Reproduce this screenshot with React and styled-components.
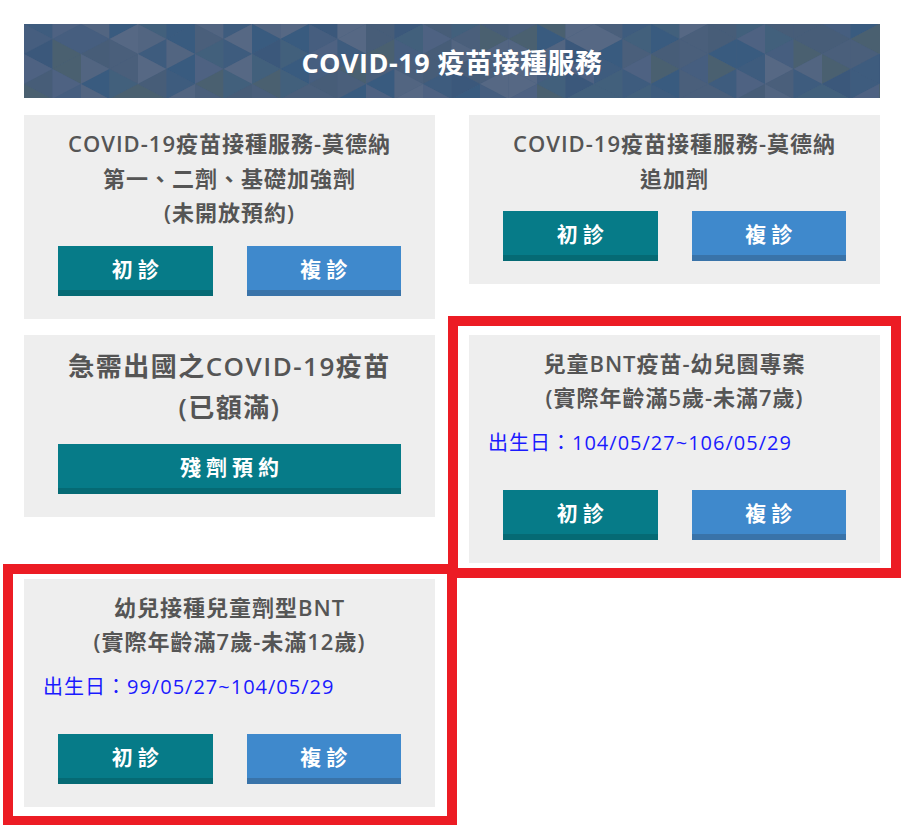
import React from "react";
import styled, { createGlobalStyle, css } from "styled-components";

const GlobalStyle = createGlobalStyle`
  html {
    overflow: hidden;
  }
  body {
    margin: 0;
    padding: 0;
    background: #fff;
    font-family: "Open Sans", "Noto Sans CJK TC", sans-serif;
  }
`;

const Page = styled.div`
  padding: 24px 24px 19px;
`;

const Banner = styled.div`
  position: relative;
  height: 74px;
  background: #475f7f;
  overflow: hidden;
  display: flex;
  align-items: center;
  justify-content: center;
  margin-bottom: 17px;
`;

const PatternSvg = styled.svg`
  position: absolute;
  inset: 0;
`;

const BannerTitle = styled.h1`
  position: relative;
  margin: 0;
  color: #fff;
  font-size: 27px;
  font-weight: 700;
  letter-spacing: 0.5px;
`;

const Grid = styled.div`
  display: grid;
  grid-template-columns: 1fr 1fr;
  column-gap: 34px;
  row-gap: 16px;
  align-items: start;
`;

const Card = styled.div`
  position: relative;
  background: #eeeeee;
  padding: 11px 0 23px;

  ${(p) =>
    p.$mark &&
    css`
      &::after {
        content: "";
        position: absolute;
        top: ${p.$mark[0]}px;
        right: ${p.$mark[1]}px;
        bottom: ${p.$mark[2]}px;
        left: ${p.$mark[3]}px;
        border: 10px solid #ec1c24;
        pointer-events: none;
      }
    `}
`;

const CardTitle = styled.div`
  text-align: center;
  color: #555;
  font-size: ${(p) => (p.$big ? 26 : 22)}px;
  line-height: ${(p) => (p.$big ? 41 : 34.5)}px;
  letter-spacing: ${(p) => (p.$big ? 1.5 : 1)}px;
  font-weight: 600;
  margin-bottom: 16px;
`;

const Birth = styled.div`
  color: #1a1aff;
  font-size: 20px;
  line-height: 30px;
  letter-spacing: 1px;
  padding-left: 19px;
  margin: -3px 0 32px;
`;

const ButtonRow = styled.div`
  display: flex;
  gap: 34px;
  padding: 0 34px;
`;

const ActionButton = styled.button`
  flex: 1;
  height: 50px;
  border: 0;
  border-bottom: 6px solid ${(p) => (p.$blue ? "#3973a9" : "#056a74")};
  background: ${(p) => (p.$blue ? "#3f89cc" : "#067b88")};
  color: #fff;
  font-family: "Open Sans", "Noto Sans CJK TC", sans-serif;
  font-size: 21px;
  font-weight: 700;
  letter-spacing: 5px;
  padding: 0 0 0 5px;
  cursor: pointer;
`;

const palette = [
  "#465e7f",
  "#3e5c7e",
  "#4e6282",
  "#3b587b",
  "#526581",
  "#42607c",
  "#4a5f7b",
  "#395b7f",
  "#566884",
  "#475d78",
  "#4a6070",
];

function BannerPattern() {
  const w = 28.5;
  const tris = [];
  for (let k = 0; k < 31; k++) {
    const x0 = k * w;
    const x1 = (k + 1) * w;
    const off = (k % 2) * 15;
    for (let j = -1; j < 3; j++) {
      const y = j * 30 + off;
      const r1 = Math.abs(Math.sin(k * 12.9898 + j * 78.233) * 43758.5453) % 1;
      const r2 = Math.abs(Math.sin(k * 39.346 + j * 11.135 + 3.1) * 24634.6345) % 1;
      tris.push(
        <polygon
          key={`a${k}-${j}`}
          points={`${x0},${y} ${x0},${y + 30} ${x1},${y + 15}`}
          fill={palette[Math.floor(r1 * palette.length)]}
        />
      );
      tris.push(
        <polygon
          key={`b${k}-${j}`}
          points={`${x1},${y + 15} ${x1},${y + 45} ${x0},${y + 30}`}
          fill={palette[Math.floor(r2 * palette.length)]}
        />
      );
    }
  }
  return (
    <PatternSvg width="100%" height="74" viewBox="0 0 856 74" preserveAspectRatio="none">
      {tris}
    </PatternSvg>
  );
}

const App = () => {
  return (
    <Page>
      <GlobalStyle />
      <Banner>
        <BannerPattern />
        <BannerTitle>COVID-19 疫苗接種服務</BannerTitle>
      </Banner>
      <Grid>
        <Card>
          <CardTitle>
            COVID-19疫苗接種服務-莫德納
            <br />
            第一、二劑、基礎加強劑
            <br />
            (未開放預約)
          </CardTitle>
          <ButtonRow>
            <ActionButton>初診</ActionButton>
            <ActionButton $blue>複診</ActionButton>
          </ButtonRow>
        </Card>
        <Card>
          <CardTitle>
            COVID-19疫苗接種服務-莫德納
            <br />
            追加劑
          </CardTitle>
          <ButtonRow>
            <ActionButton>初診</ActionButton>
            <ActionButton $blue>複診</ActionButton>
          </ButtonRow>
        </Card>
        <Card>
          <CardTitle $big>
            急需出國之COVID-19疫苗
            <br />
            (已額滿)
          </CardTitle>
          <ButtonRow>
            <ActionButton>殘劑預約</ActionButton>
          </ButtonRow>
        </Card>
        <Card $mark={[-19, -21, -15, -21]}>
          <CardTitle>
            兒童BNT疫苗-幼兒園專案
            <br />
            (實際年齡滿5歲-未滿7歲)
          </CardTitle>
          <Birth>出生日：104/05/27~106/05/29</Birth>
          <ButtonRow>
            <ActionButton>初診</ActionButton>
            <ActionButton $blue>複診</ActionButton>
          </ButtonRow>
        </Card>
        <Card $mark={[-15, -22, -19, -21]}>
          <CardTitle>
            幼兒接種兒童劑型BNT
            <br />
            (實際年齡滿7歲-未滿12歲)
          </CardTitle>
          <Birth>出生日：99/05/27~104/05/29</Birth>
          <ButtonRow>
            <ActionButton>初診</ActionButton>
            <ActionButton $blue>複診</ActionButton>
          </ButtonRow>
        </Card>
      </Grid>
    </Page>
  );
};

export default App;
